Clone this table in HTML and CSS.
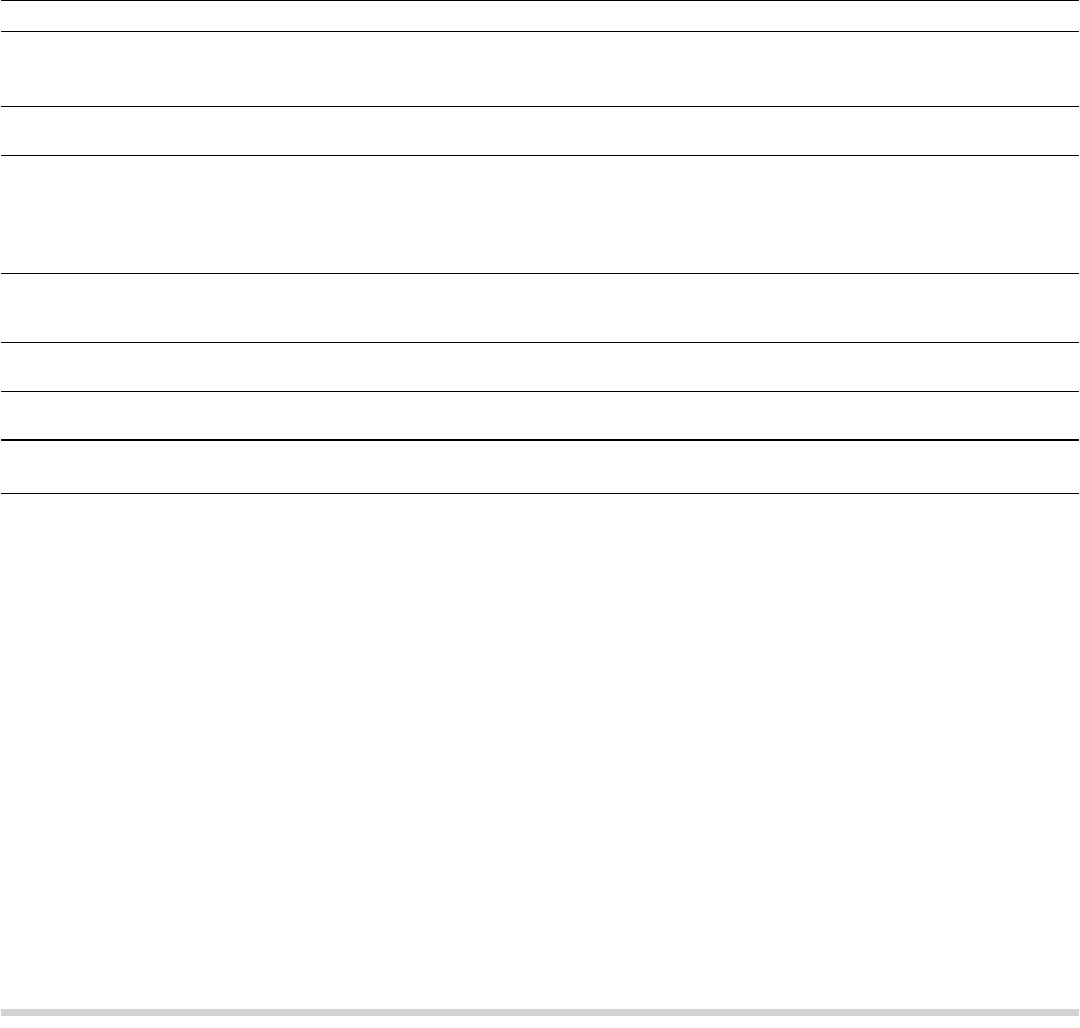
FILE: index.html
```html
<!DOCTYPE html>
<html>
<head>
<meta charset="utf-8">
<link rel="stylesheet" href="styles.css">
</head>
<body>
<div class="page">
  <div class="table">
    <div class="row r1"></div>
    <div class="row r2"></div>
    <div class="row r3"></div>
    <div class="row r4"></div>
    <div class="row r5"></div>
    <div class="row r6"></div>
    <div class="row r7 thick"></div>
    <div class="row r8"></div>
  </div>
  <div class="bar"></div>
</div>
</body>
</html>
```
FILE: styles.css
```css
html, body {
  margin: 0;
  padding: 0;
  background: #fff;
  font-family: "Liberation Sans", Arial, sans-serif;
}
.page {
  height: 1028px;
  display: flex;
  flex-direction: column;
  padding: 0 1px;
  box-sizing: border-box;
}
.table {
  border-top: 1px solid #000;
}
.row {
  border-bottom: 1px solid #000;
}
.row.thick {
  border-bottom-width: 2px;
}
.r1 { height: 30px; }
.r2 { height: 74px; }
.r3 { height: 48px; }
.r4 { height: 117px; }
.r5 { height: 68px; }
.r6 { height: 48px; }
.r7 { height: 47px; }
.r8 { height: 52px; }
.bar {
  margin-top: auto;
  margin-bottom: 12px;
  height: 7px;
  background: #d3d3d3;
}
```
